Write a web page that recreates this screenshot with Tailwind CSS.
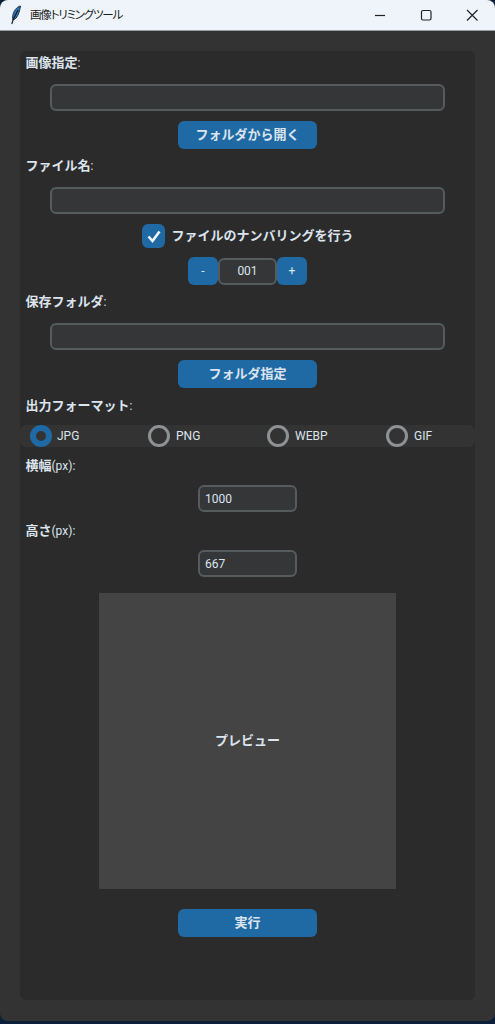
<!DOCTYPE html>
<html lang="ja">
<head>
  <meta charset="UTF-8" />
  <title>画像トリミングツール</title>
  <script src="https://cdn.jsdelivr.net/npm/@tailwindcss/browser@4"></script>
</head>
<body class="bg-[#0b1f3a] h-[1024px] w-[495px] overflow-hidden font-['Roboto','Noto_Sans_CJK_JP',sans-serif]">
  <div class="h-[1021px] bg-[#333333] rounded-[8px] overflow-hidden flex flex-col">

    <!-- Title bar -->
    <div class="h-[31px] shrink-0 bg-[#eff4fb] border-b border-[#9a9da1] flex items-center text-[#1a1a1a]">
      <svg class="ml-[10px] w-[12px] h-[20px]" viewBox="0 0 12 20">
        <path d="M10.5 1 C6.5 2 3.5 6 2.8 10.5 C2.5 12.5 2.6 14 3 15 C7 14 9.5 8 10.5 1Z" fill="#2f74b5" stroke="#12263c" stroke-width="0.9"/>
        <path d="M8 5 L3 15 L1.8 19" fill="none" stroke="#0d1520" stroke-width="1.1"/>
      </svg>
      <span class="ml-[8px] text-[11.5px] tracking-[-1.2px] [font-feature-settings:'palt'] font-['Noto_Sans_CJK_JP',sans-serif]">画像トリミングツール</span>
      <div class="ml-auto flex items-center">
        <svg class="w-[46px] h-[30px]" viewBox="0 0 46 30"><path d="M18 15.5H28" stroke="#222" stroke-width="1.2"/></svg>
        <svg class="w-[46px] h-[30px]" viewBox="0 0 46 30"><rect x="18.5" y="10.5" width="9.5" height="9.5" rx="1.5" fill="none" stroke="#222" stroke-width="1.2"/></svg>
        <svg class="w-[46px] h-[30px]" viewBox="0 0 46 30"><path d="M18 10L28.5 20.5M28.5 10L18 20.5" stroke="#222" stroke-width="1.2"/></svg>
      </div>
    </div>

    <!-- Main card -->
    <div class="mx-[20px] mt-[20px] h-[949px] bg-[#2b2b2b] rounded-[6px] text-[#dce4ee] flex flex-col items-center">
      <div class="self-start ml-[5.5px] mt-[3px] h-[18px] leading-[18px] text-[13px] font-bold">画像指定<span class="font-normal text-[12px]">:</span></div>
      <div class="mt-[12px] w-[395px] h-[27px] bg-[#343638] border-2 border-[#565b5e] rounded-[6px]"></div>
      <button class="mt-[10px] w-[139px] h-[28px] bg-[#1f6aa5] rounded-[6px] text-[13px] font-bold">フォルダから開く</button>

      <div class="self-start ml-[5.5px] mt-[8px] h-[18px] leading-[18px] text-[13px] font-bold">ファイル名<span class="font-normal text-[12px]">:</span></div>
      <div class="mt-[12px] w-[395px] h-[27px] bg-[#343638] border-2 border-[#565b5e] rounded-[6px]"></div>

      <div class="mt-[10px] h-[24px] pl-[1px] flex items-center">
        <div class="w-[23px] h-[24px] bg-[#1f6aa5] rounded-[6px] flex items-center justify-center">
          <svg class="w-[16px] h-[16px]" viewBox="0 0 16 16"><path d="M2.5 8.5L6.5 13L13.5 3.5" fill="none" stroke="#f2f5f9" stroke-width="2.6"/></svg>
        </div>
        <span class="ml-[6px] text-[13px] font-bold">ファイルのナンバリングを行う</span>
      </div>

      <div class="mt-[9px] flex items-center h-[28px]">
        <button class="w-[30px] h-[28px] bg-[#1f6aa5] rounded-[6px] text-[12px]">-</button>
        <div class="w-[59px] h-[27px] bg-[#343638] border-2 border-[#565b5e] rounded-[6px] text-[12px] flex items-center justify-center">001</div>
        <button class="w-[30px] h-[28px] bg-[#1f6aa5] rounded-[6px] text-[12px]">+</button>
      </div>

      <div class="self-start ml-[5.5px] mt-[8px] h-[18px] leading-[18px] text-[13px] font-bold">保存フォルダ<span class="font-normal text-[12px]">:</span></div>
      <div class="mt-[12px] w-[395px] h-[27px] bg-[#343638] border-2 border-[#565b5e] rounded-[6px]"></div>
      <button class="mt-[10px] w-[139px] h-[28px] bg-[#1f6aa5] rounded-[6px] text-[13px] font-bold">フォルダ指定</button>

      <div class="self-start ml-[5.5px] mt-[9px] h-[18px] leading-[18px] text-[13px] font-bold">出力フォーマット<span class="font-normal text-[12px]">:</span></div>

      <div class="mt-[10px] w-full h-[22px] bg-[#333333] rounded-[6px] grid grid-cols-[118px_119px_119px_1fr] pl-[10px] text-[12px]">
        <div class="flex items-center gap-[5px]">
          <span class="w-[22px] h-[22px] rounded-full border-[6px] border-[#1f6aa5]"></span>JPG
        </div>
        <div class="flex items-center gap-[6px]">
          <span class="w-[22px] h-[22px] rounded-full border-[3px] border-[#8f9295]"></span>PNG
        </div>
        <div class="flex items-center gap-[6px]">
          <span class="w-[22px] h-[22px] rounded-full border-[3px] border-[#8f9295]"></span>WEBP
        </div>
        <div class="flex items-center gap-[6px]">
          <span class="w-[22px] h-[22px] rounded-full border-[3px] border-[#8f9295]"></span>GIF
        </div>
      </div>

      <div class="self-start ml-[5.5px] mt-[10px] h-[18px] leading-[18px] text-[12px]"><span class="font-bold text-[13px]">横幅</span>(px):</div>
      <div class="mt-[10px] w-[99px] h-[27px] bg-[#343638] border-2 border-[#565b5e] rounded-[6px] text-[12px] flex items-center pl-[5px]">1000</div>

      <div class="self-start ml-[5.5px] mt-[10px] h-[18px] leading-[18px] text-[12px]"><span class="font-bold text-[13px]">高さ</span>(px):</div>
      <div class="mt-[10px] w-[99px] h-[27px] bg-[#343638] border-2 border-[#565b5e] rounded-[6px] text-[12px] flex items-center pl-[5px]">667</div>

      <div class="mt-[16px] w-[297px] h-[296px] bg-[#444444] flex items-center justify-center text-[13px] font-bold">プレビュー</div>

      <button class="mt-[20px] w-[139px] h-[28px] bg-[#1f6aa5] rounded-[6px] text-[13px] font-bold">実行</button>
    </div>
  </div>
</body>
</html>
